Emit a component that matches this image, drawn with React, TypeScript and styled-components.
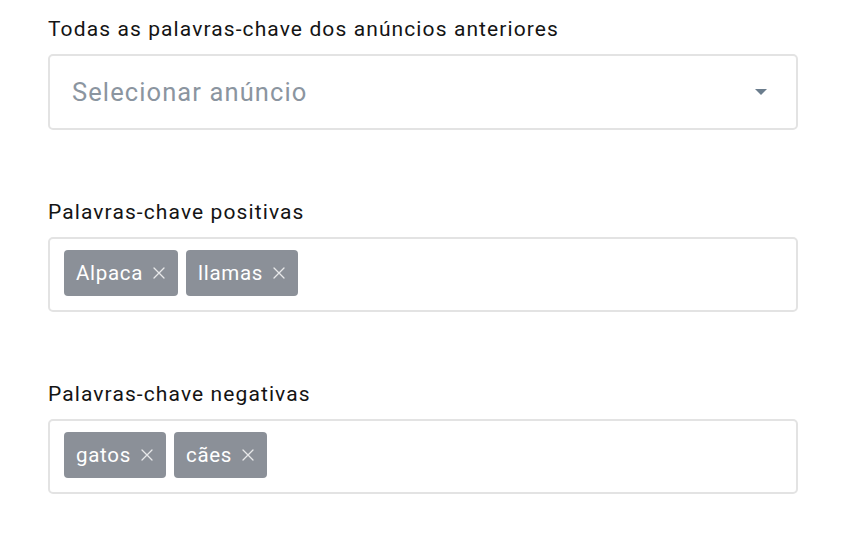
import React from 'react'
import styled, { createGlobalStyle } from 'styled-components'

const GlobalStyle = createGlobalStyle`
	html, body {
		margin: 0;
		padding: 0;
		background: #ffffff;
	}
	body {
		font-family: Roboto, "Noto Sans", "Liberation Sans", sans-serif;
		-webkit-font-smoothing: antialiased;
	}
`

type Section = {
	label: string
	tags?: string[]
	placeholder?: string
}

const sections: Section[] = [
	{ label: 'Todas as palavras-chave dos anúncios anteriores', placeholder: 'Selecionar anúncio' },
	{ label: 'Palavras-chave positivas', tags: ['Alpaca', 'llamas'] },
	{ label: 'Palavras-chave negativas', tags: ['gatos', 'cães'] },
]

function CloseIcon() {
	return (
		<svg width="12" height="12" viewBox="0 0 12 12" fill="none">
			<path d="M1 1L11 11M11 1L1 11" stroke="currentColor" strokeWidth="1.3" strokeLinecap="round" />
		</svg>
	)
}

function App() {
	return (
		<>
			<GlobalStyle />
			<Page>
				{sections.map(section => (
					<Field key={section.label}>
						<Label>{section.label}</Label>
						{section.placeholder ? (
							<SelectBox $tall>
								<Placeholder>{section.placeholder}</Placeholder>
								<Caret />
							</SelectBox>
						) : (
							<TagBox>
								{section.tags?.map(tag => (
									<Tag key={tag}>
										{tag}
										<TagClose><CloseIcon /></TagClose>
									</Tag>
								))}
							</TagBox>
						)}
					</Field>
				))}
			</Page>
		</>
	)
}

export default App

//#region styles
const Page = styled.div`
	display: flex;
	flex-direction: column;
	gap: 70px;
	padding: 17px 0 0 48px;
	width: 750px;
`

const Field = styled.div`
	display: flex;
	flex-direction: column;
`

const Label = styled.div`
	font-size: 21px;
	line-height: 24px;
	color: #141414;
	margin-bottom: 13px;
	letter-spacing: 1.1px;
	white-space: nowrap;
`

const SelectBox = styled.div<{ $tall?: boolean }>`
	box-sizing: border-box;
	display: flex;
	align-items: center;
	height: ${p => (p.$tall ? '76px' : '75px')};
	padding: 0 29px 0 22px;
	border: 2px solid #e3e3e3;
	border-radius: 5px;
	background: #ffffff;
`

const TagBox = styled(SelectBox)`
	align-items: flex-start;
	gap: 8px;
	padding: 11px 14px 0;
`

const Placeholder = styled.span`
	flex: 1;
	font-size: 25.5px;
	color: #8b95a0;
	letter-spacing: 1.1px;
	white-space: nowrap;
`

const Caret = styled.span`
	width: 0;
	height: 0;
	border-left: 6px solid transparent;
	border-right: 6px solid transparent;
	border-top: 6px solid #6b7d8d;
`

const Tag = styled.span`
	display: inline-flex;
	align-items: center;
	gap: 10px;
	height: 46px;
	box-sizing: border-box;
	padding: 0 13px 0 12px;
	border-radius: 4px;
	background: #8b9098;
	color: #ffffff;
	font-size: 20.5px;
	letter-spacing: 0.7px;
	white-space: nowrap;
`

const TagClose = styled.span`
	display: inline-flex;
	color: rgba(255, 255, 255, 0.8);
`
//#endregion
